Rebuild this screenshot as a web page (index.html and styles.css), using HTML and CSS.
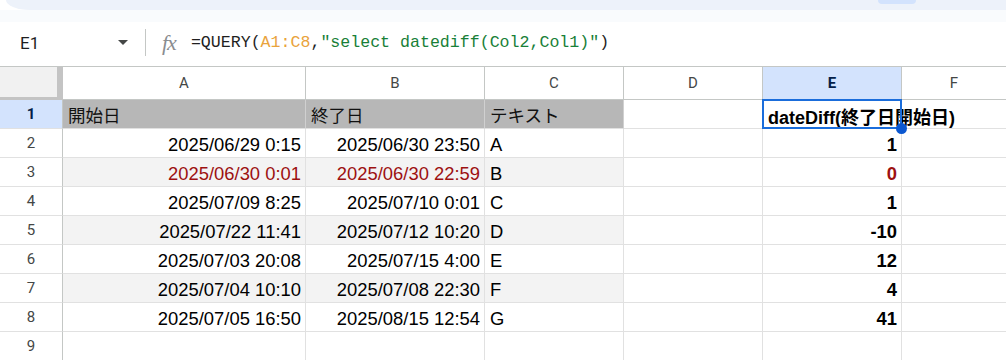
FILE: index.html
```html
<!DOCTYPE html>
<html>
<head>
    <link rel="stylesheet" href="styles.css">
</head>
<body>
    <div class="toolbar">
        <div class="toolbar-pill"></div>
    </div>
    <div class="toolbar-gap"></div>

    <div class="formula-bar">
        <div class="name-box">
            <span class="cell-ref">E1</span>
            <span class="caret"></span>
        </div>
        <div class="divider"></div>
        <span class="fx">fx</span>
        <div class="formula">=QUERY(<span class="ref">A1:C8</span>,<span class="str">"select datediff(Col2,Col1)"</span>)</div>
    </div>

    <div class="sheet">
        <!-- column headers -->
        <div class="corner"></div>
        <div class="col-head">A</div>
        <div class="col-head">B</div>
        <div class="col-head">C</div>
        <div class="col-head">D</div>
        <div class="col-head active">E</div>
        <div class="col-head last">F</div>

        <!-- row 1 -->
        <div class="row-head active">1</div>
        <div class="cell title">開始日</div>
        <div class="cell title">終了日</div>
        <div class="cell title">テキスト</div>
        <div class="cell"></div>
        <div class="cell selected bold">dateDiff(終了日開始日)</div>
        <div class="cell last"></div>

        <!-- row 2 -->
        <div class="row-head">2</div>
        <div class="cell num">2025/06/29 0:15</div>
        <div class="cell num">2025/06/30 23:50</div>
        <div class="cell">A</div>
        <div class="cell"></div>
        <div class="cell num bold">1</div>
        <div class="cell last"></div>

        <!-- row 3 -->
        <div class="row-head">3</div>
        <div class="cell num band red">2025/06/30 0:01</div>
        <div class="cell num band red">2025/06/30 22:59</div>
        <div class="cell band">B</div>
        <div class="cell"></div>
        <div class="cell num bold red">0</div>
        <div class="cell last"></div>

        <!-- row 4 -->
        <div class="row-head">4</div>
        <div class="cell num">2025/07/09 8:25</div>
        <div class="cell num">2025/07/10 0:01</div>
        <div class="cell">C</div>
        <div class="cell"></div>
        <div class="cell num bold">1</div>
        <div class="cell last"></div>

        <!-- row 5 -->
        <div class="row-head">5</div>
        <div class="cell num band">2025/07/22 11:41</div>
        <div class="cell num band">2025/07/12 10:20</div>
        <div class="cell band">D</div>
        <div class="cell"></div>
        <div class="cell num bold">-10</div>
        <div class="cell last"></div>

        <!-- row 6 -->
        <div class="row-head">6</div>
        <div class="cell num">2025/07/03 20:08</div>
        <div class="cell num">2025/07/15 4:00</div>
        <div class="cell">E</div>
        <div class="cell"></div>
        <div class="cell num bold">12</div>
        <div class="cell last"></div>

        <!-- row 7 -->
        <div class="row-head">7</div>
        <div class="cell num band">2025/07/04 10:10</div>
        <div class="cell num band">2025/07/08 22:30</div>
        <div class="cell band">F</div>
        <div class="cell"></div>
        <div class="cell num bold">4</div>
        <div class="cell last"></div>

        <!-- row 8 -->
        <div class="row-head">8</div>
        <div class="cell num">2025/07/05 16:50</div>
        <div class="cell num">2025/08/15 12:54</div>
        <div class="cell">G</div>
        <div class="cell"></div>
        <div class="cell num bold">41</div>
        <div class="cell last"></div>

        <!-- row 9 -->
        <div class="row-head">9</div>
        <div class="cell"></div>
        <div class="cell"></div>
        <div class="cell"></div>
        <div class="cell"></div>
        <div class="cell"></div>
        <div class="cell last"></div>
    </div>
</body>
</html>
```

FILE: styles.css
```css
body {
    margin: 0;
    background: #fff;
    font-family: 'Liberation Sans', Arial, 'Noto Sans CJK JP', sans-serif;
    color: #000;
    overflow: hidden;
}
.toolbar {
    height: 10px;
    margin-left: 6px;
    background: #edf2fa;
    border-bottom-left-radius: 24px 10px;
    display: flex;
    justify-content: flex-end;
}
.toolbar-pill {
    width: 38px;
    height: 4px;
    margin-right: 90px;
    background: #d3e3fd;
    border-radius: 0 0 6px 6px;
}
.toolbar-gap {
    height: 12px;
    background: #f9fbfd;
}
.formula-bar {
    height: 44px;
    display: flex;
    align-items: center;
    padding-bottom: 3px;
    box-sizing: border-box;
    background: #fff;
}
.name-box {
    width: 145px;
    display: flex;
    align-items: center;
    box-sizing: border-box;
    padding: 0 17px 0 20px;
}
.cell-ref {
    font-family: Roboto, 'Liberation Sans', sans-serif;
    font-size: 17px;
    color: #1f1f1f;
    flex: 1;
}
.caret {
    width: 0;
    height: 0;
    border-left: 5px solid transparent;
    border-right: 5px solid transparent;
    border-top: 5px solid #444746;
}
.divider {
    width: 1px;
    height: 27px;
    background: #c4c7c5;
}
.fx {
    font-family: 'Liberation Serif', serif;
    font-style: italic;
    font-size: 22px;
    color: #8a8d90;
    margin: 0 15px 0 16px;
    letter-spacing: -1px;
}
.formula {
    font-family: 'Liberation Mono', 'DejaVu Sans Mono', monospace;
    font-size: 16.6px;
    color: #1f1f1f;
    white-space: nowrap;
}
.formula .ref {
    color: #e9a33c;
}
.formula .str {
    color: #188038;
}

.sheet {
    display: grid;
    grid-template-columns: 63px 243px 179px 139px 139px 139px 1fr;
    grid-template-rows: 33px repeat(9, 29px);
    border-top: 1px solid #c4c7c5;
}
.corner {
    background: #f1f1f1;
    border-right: 6px solid #c4c4c4;
    border-bottom: 3px solid #c4c4c4;
}
.col-head {
    display: flex;
    align-items: center;
    justify-content: center;
    font-family: Roboto, 'Liberation Sans', sans-serif;
    font-size: 15px;
    color: #444746;
    border-right: 1px solid #c4c7c5;
    border-bottom: 1px solid #c4c7c5;
}
.col-head.active,
.row-head.active {
    background: #d3e3fd;
    color: #041e49;
    font-weight: bold;
}
.col-head.last,
.cell.last {
    border-right: none;
}
.row-head {
    display: flex;
    align-items: center;
    justify-content: center;
    font-family: Roboto, 'Liberation Sans', sans-serif;
    font-size: 15px;
    color: #444746;
    border-right: 1px solid #c4c7c5;
    border-bottom: 1px solid #e1e1e1;
}
.cell {
    display: flex;
    align-items: center;
    padding: 3px 4px 0 5px;
    font-size: 18.4px;
    white-space: nowrap;
    border-right: 1px solid #e1e1e1;
    border-bottom: 1px solid #e1e1e1;
    min-width: 0;
}
.cell.title {
    background: #b7b7b7;
    font-family: 'Noto Sans CJK JP', sans-serif;
    font-size: 17.5px;
    padding-top: 0;
    border-right-color: #d0d0d0;
    color: #111;
}
.cell.band {
    background: #f3f3f3;
}
.cell.num {
    justify-content: flex-end;
}
.cell.bold {
    font-weight: bold;
}
.cell.red {
    color: #9d1111;
}
.cell.selected {
    position: relative;
    overflow: visible;
    z-index: 1;
    font-size: 18px;
}
.cell.selected::before {
    content: "";
    position: absolute;
    left: -1px;
    top: -1px;
    right: -1px;
    bottom: -1px;
    border: 2px solid #1a6ddb;
}
.cell.selected::after {
    content: "";
    position: absolute;
    right: -6px;
    bottom: -6px;
    width: 11px;
    height: 11px;
    border-radius: 50%;
    background: #0b57d0;
}
```
